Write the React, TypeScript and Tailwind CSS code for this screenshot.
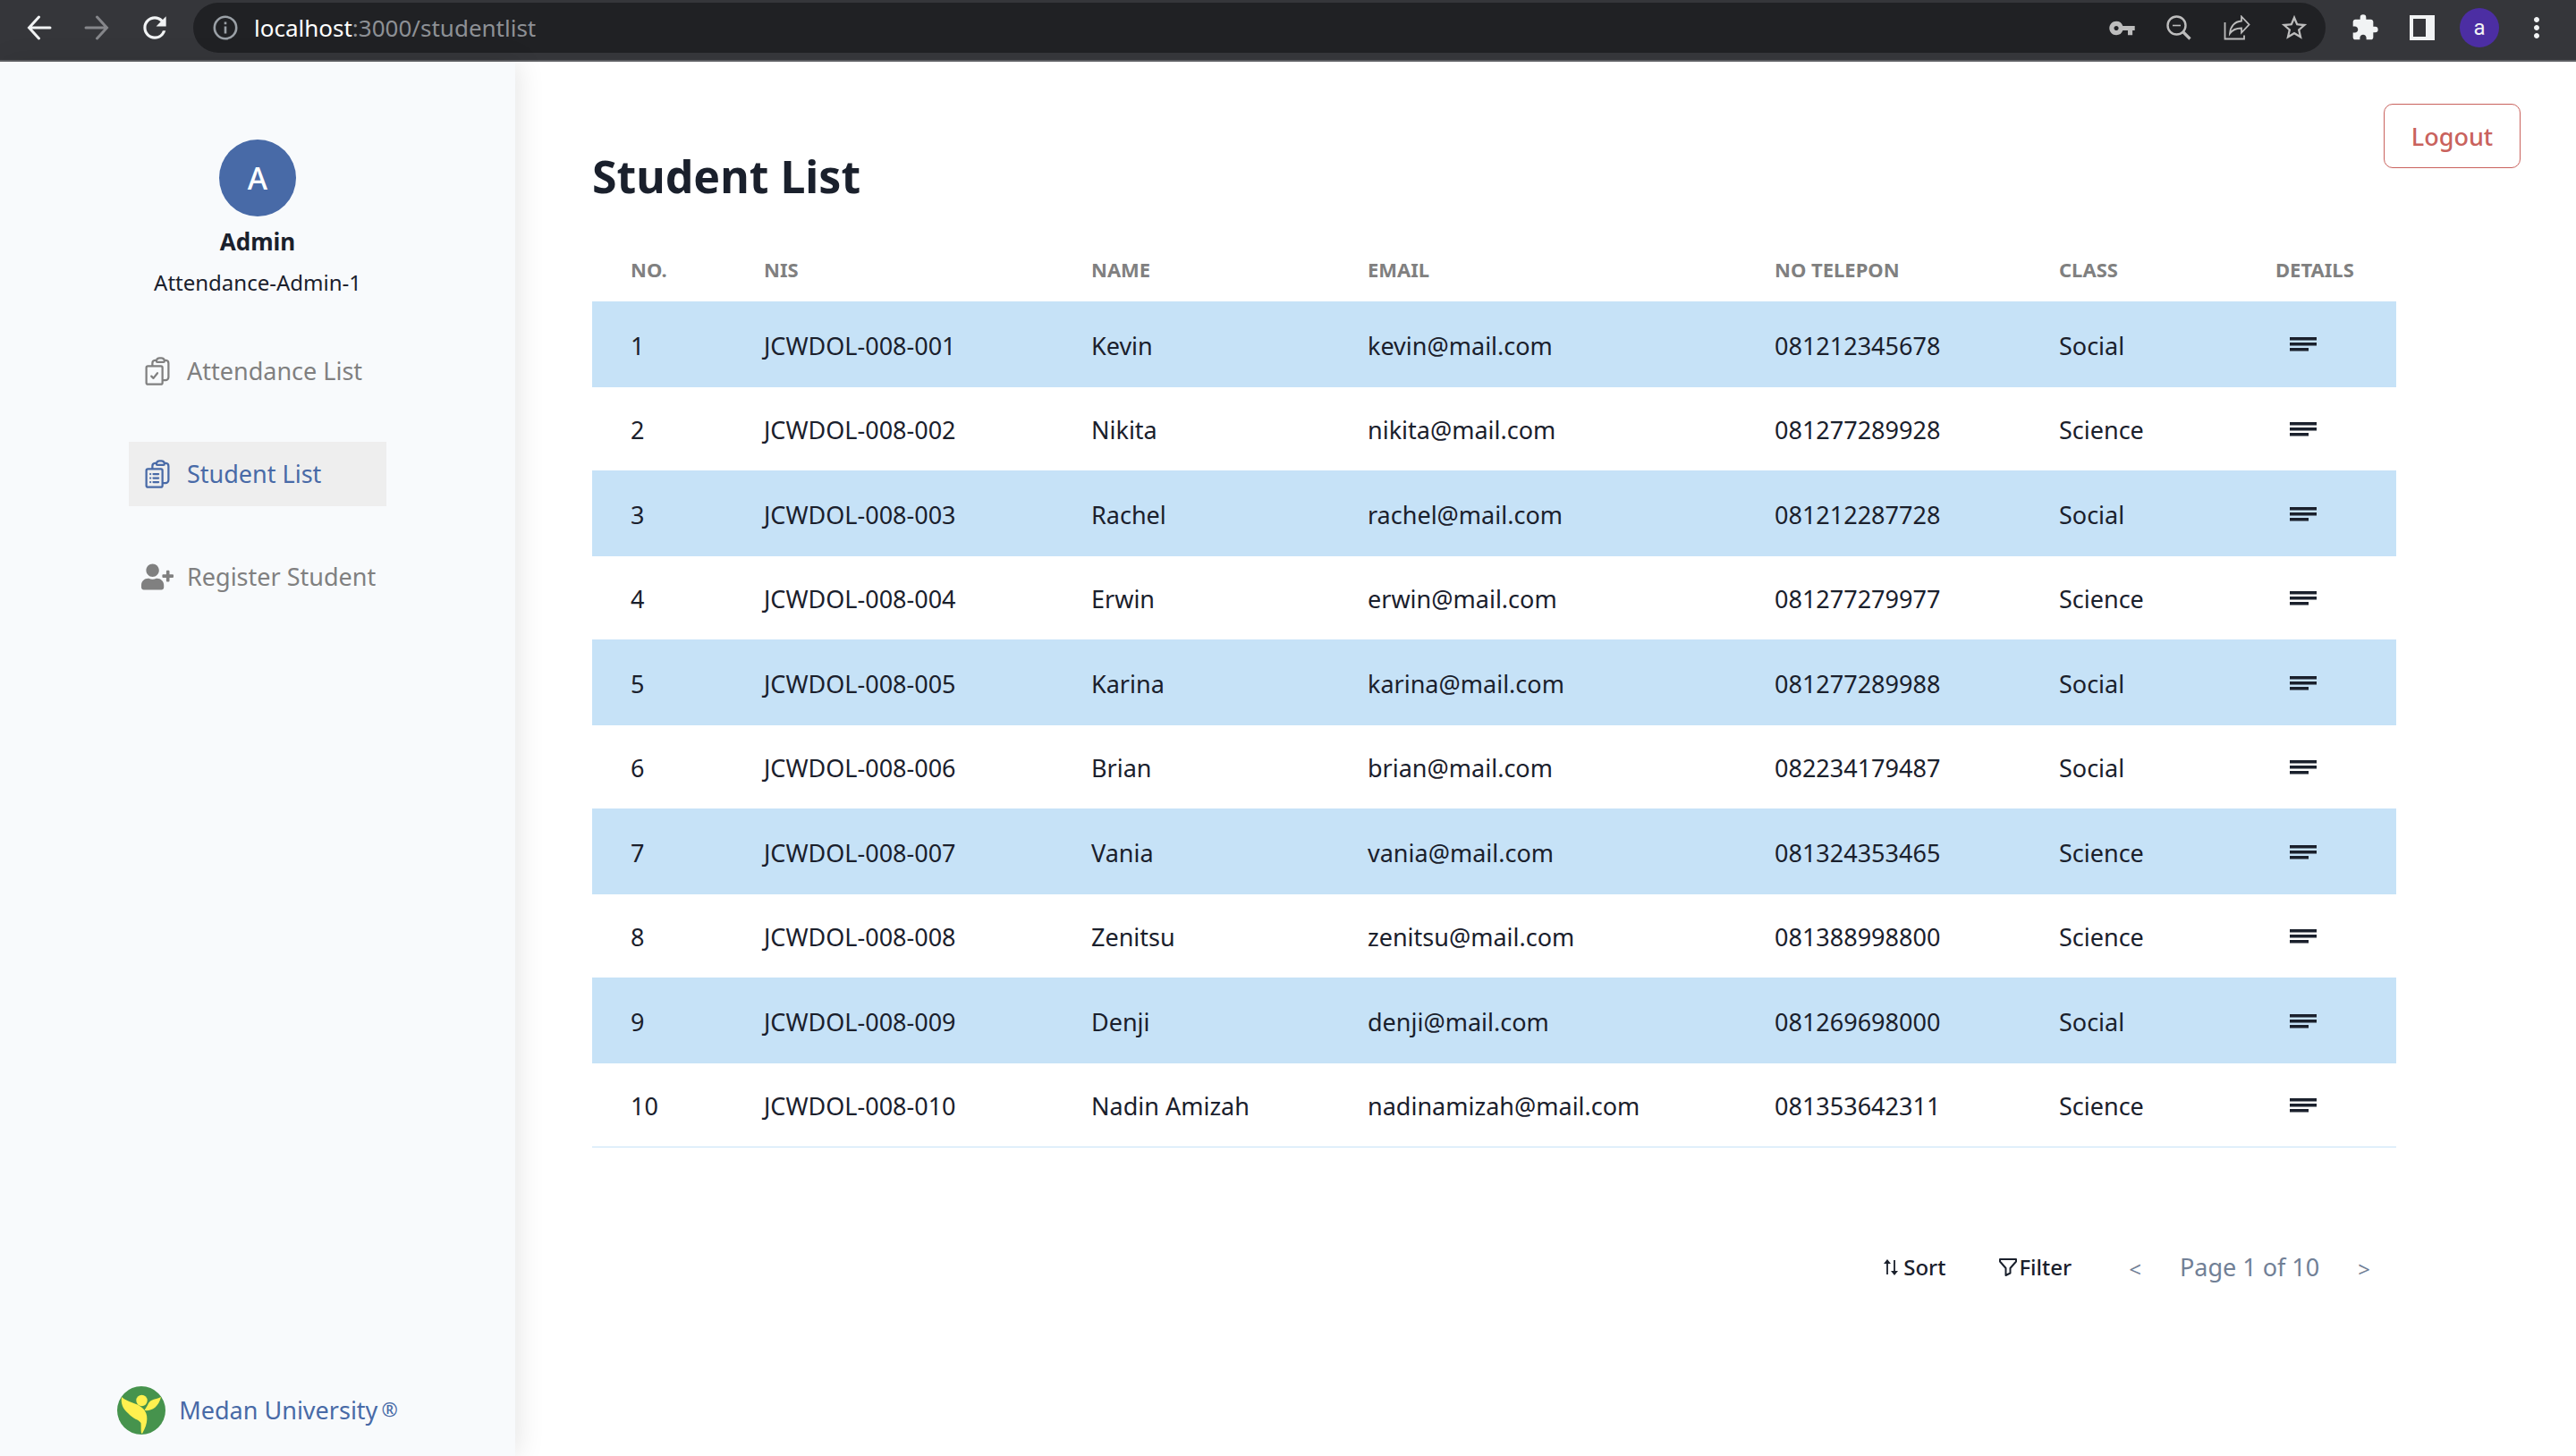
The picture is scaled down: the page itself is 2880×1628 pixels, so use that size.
import React from "react";
import { HiOutlineClipboardDocumentCheck, HiOutlineClipboardDocumentList } from "react-icons/hi2";
import { FaUserPlus } from "react-icons/fa";
import { MdVpnKey, MdExtension, MdStarBorder, MdRefresh, MdMoreVert } from "react-icons/md";

type Student = { no: number; name: string; email: string; phone: string; kelas: string };

const students: Student[] = [
  { no: 1, name: "Kevin", email: "kevin@mail.com", phone: "081212345678", kelas: "Social" },
  { no: 2, name: "Nikita", email: "nikita@mail.com", phone: "081277289928", kelas: "Science" },
  { no: 3, name: "Rachel", email: "rachel@mail.com", phone: "081212287728", kelas: "Social" },
  { no: 4, name: "Erwin", email: "erwin@mail.com", phone: "081277279977", kelas: "Science" },
  { no: 5, name: "Karina", email: "karina@mail.com", phone: "081277289988", kelas: "Social" },
  { no: 6, name: "Brian", email: "brian@mail.com", phone: "082234179487", kelas: "Social" },
  { no: 7, name: "Vania", email: "vania@mail.com", phone: "081324353465", kelas: "Science" },
  { no: 8, name: "Zenitsu", email: "zenitsu@mail.com", phone: "081388998800", kelas: "Science" },
  { no: 9, name: "Denji", email: "denji@mail.com", phone: "081269698000", kelas: "Social" },
  { no: 10, name: "Nadin Amizah", email: "nadinamizah@mail.com", phone: "081353642311", kelas: "Science" },
];

const columns = [
  { label: "NO.", width: "w-[149px]" },
  { label: "NIS", width: "w-[366px]" },
  { label: "NAME", width: "w-[309px]" },
  { label: "EMAIL", width: "w-[455px]" },
  { label: "NO TELEPON", width: "w-[318px]" },
  { label: "CLASS", width: "w-[242px]" },
  { label: "DETAILS", width: "w-[178px]" },
];

function Arrow({ className }: { className: string }) {
  return (
    <svg viewBox="0 0 28 28" className={className} fill="none" stroke="currentColor" strokeWidth="3" strokeLinecap="round">
      <path d="M26 14H3M13.500 2L2.500 14l11 12" />
    </svg>
  );
}

function InfoIcon() {
  return (
    <svg viewBox="0 0 28 28" className="size-7 text-[#9aa0a6]" fill="none" stroke="currentColor" strokeWidth="2.600">
      <circle cx="14" cy="14" r="12.200" />
      <path d="M14 12.500v8M14 7.500v2.800" />
    </svg>
  );
}

function ZoomOutIcon() {
  return (
    <svg viewBox="0 0 28 28" className="size-7" fill="none" stroke="currentColor" strokeWidth="2.400">
      <circle cx="11.500" cy="11.500" r="10" />
      <path d="M7 11.500h9" strokeWidth="1.600" />
      <path d="M18.500 18.500l8 8" strokeWidth="3.200" />
    </svg>
  );
}

function ShareIcon() {
  return (
    <svg viewBox="0 0 30 28" className="h-7 w-[30px]" fill="none" stroke="currentColor" strokeWidth="1.800">
      <path d="M1.500 8v18.500H23V22.500" />
      <path d="M20 1.500L28.500 10.500L20 19.500V14.500C14 14.500 10 16 7 20.500C7.500 13 12 7 20 6.500Z" />
    </svg>
  );
}

function PanelIcon() {
  return (
    <svg viewBox="0 0 28 28" className="size-7" fill="currentColor">
      <path fillRule="evenodd" d="M0 0H28V28H0ZM4 4V24H18V4Z" />
    </svg>
  );
}

function BrowserBar() {
  return (
    <header className="flex h-[69px] shrink-0 items-start border-b-2 border-[#5d5e62] bg-[#35363a] pt-[3px] text-[#f1f3f4]">
      <div className="flex h-14 w-[216px] shrink-0 items-center gap-9 pl-[30px]">
        <button aria-label="Back"><Arrow className="size-7" /></button>
        <button aria-label="Forward" className="text-[#85868a]"><Arrow className="size-7 rotate-180" /></button>
        <button aria-label="Reload"><MdRefresh className="-ml-1 size-[38px]" /></button>
      </div>
      <div className="flex h-14 grow items-center rounded-full bg-[#202124] pr-[18px] pl-[22px] text-[#bdbdbd]">
        <InfoIcon />
        <p className="grow pl-[18px] text-[26px] text-[#8d9095]">
          <span className="text-white">localhost</span>:3000/studentlist
        </p>
        <div className="flex items-center">
          <button aria-label="Passwords"><MdVpnKey className="size-[31px]" /></button>
          <button aria-label="Zoom" className="ml-[34px]"><ZoomOutIcon /></button>
          <button aria-label="Share" className="ml-9"><ShareIcon /></button>
          <button aria-label="Bookmark" className="ml-8"><MdStarBorder className="size-[34px]" /></button>
        </div>
      </div>
      <div className="flex h-14 w-[280px] shrink-0 items-center pl-7">
        <button aria-label="Extensions"><MdExtension className="size-8" /></button>
        <button aria-label="Side panel" className="ml-[34px]"><PanelIcon /></button>
        <button aria-label="Profile" className="ml-7 flex size-11 items-center justify-center rounded-full bg-[#4c2ea3] font-[Roboto] text-2xl">a</button>
        <button aria-label="Menu" className="ml-6"><MdMoreVert className="size-9" /></button>
      </div>
    </header>
  );
}

function Logo() {
  return (
    <svg viewBox="0 0 54 54" className="size-[54px]">
      <circle cx="27" cy="27" r="27" fill="#46934d" />
      <g fill="#fff04f">
        <circle cx="27.500" cy="16" r="6.200" />
        <path d="M5 12C11 18 22 18 29 25C35 31 35 41 28 53C26 53 27 47 26.500 41C24 37 18 37 12 30C6 25 4 19 5 12Z" />
        <path d="M49 12C43 15 38 14 35 19C34 22 32 24 30.500 27C38 28 46 24 49 12Z" />
      </g>
    </svg>
  );
}

function Sidebar() {
  const item = "flex h-[72px] w-[288px] items-center gap-[15px] pl-[14px] whitespace-nowrap";
  return (
    <aside className="flex w-[20%] shrink-0 flex-col items-center bg-[#f8fafc] pt-[87px] pb-6 shadow-[4px_0_28px_rgba(0,0,0,0.1)]">
      <div className="flex size-[86px] items-center justify-center rounded-full bg-[#486aa7] text-[34px] font-medium text-white">A</div>
      <p className="mt-2 text-[26px] leading-10 font-bold">Admin</p>
      <p className="mt-2 text-2xl leading-9">Attendance-Admin-1</p>
      <nav className="mt-[45px] flex flex-col gap-[43px] text-[27px] text-[#808080]">
        <a href="#attendance" className={item}>
          <HiOutlineClipboardDocumentCheck className="size-9 shrink-0" />
          Attendance List
        </a>
        <a href="#students" className={`${item} bg-[#eeeeee] text-[#486aa7]`}>
          <HiOutlineClipboardDocumentList className="size-9 shrink-0" />
          Student List
        </a>
        <a href="#register" className={item}>
          <FaUserPlus className="size-9 shrink-0" />
          Register Student
        </a>
      </nav>
      <footer className="mt-auto flex items-center gap-[15px] text-[27px] leading-10 text-[#486aa7]">
        <Logo />
        <p>Medan University<span className="pl-1 align-[3px] text-[22px] leading-none">®</span></p>
      </footer>
    </aside>
  );
}

function DetailsIcon() {
  return (
    <svg viewBox="0 0 30 16" className="h-4 w-[30px]" fill="currentColor">
      <rect width="30" height="3.500" />
      <rect y="6" width="30" height="3.500" />
      <rect y="12" width="21" height="3.500" />
    </svg>
  );
}

function StudentTable() {
  return (
    <table className="w-full table-fixed text-left">
      <thead>
        <tr className="h-[71px]">
          {columns.map((c) => (
            <th key={c.label} scope="col" className={`${c.width} pl-[43px] text-[22px] font-bold text-[#808080]`}>{c.label}</th>
          ))}
        </tr>
      </thead>
      <tbody>
        {students.map((s) => (
          <tr key={s.no} className="h-[95px] border-b border-[#c6e2f7] odd:bg-[#c6e2f7] even:h-[94px] [&>td]:pt-[5px] [&>td]:pl-[43px] [&>td:last-child]:pt-0.5">
            <td>{s.no}</td>
            <td>JCWDOL-008-{String(s.no).padStart(3, "0")}</td>
            <td>{s.name}</td>
            <td>{s.email}</td>
            <td>{s.phone}</td>
            <td>{s.kelas}</td>
            <td>
              <button aria-label={`Details of ${s.name}`} className="block px-4"><DetailsIcon /></button>
            </td>
          </tr>
        ))}
      </tbody>
    </table>
  );
}

function SortIcon() {
  return (
    <svg viewBox="0 0 16 18" className="h-[18px] w-4" fill="none" stroke="currentColor" strokeWidth="1.800">
      <path d="M4 17V3M12 1V15" />
      <path d="M0 5L4 0L8 5ZM8 13L12 18L16 13Z" fill="currentColor" stroke="none" />
    </svg>
  );
}

function FilterIcon() {
  return (
    <svg viewBox="0 0 20 20" className="size-5" fill="none" stroke="currentColor" strokeWidth="2" strokeLinejoin="round">
      <path d="M1 1H19V3.500L12.500 11V16.500L7.500 19V11L1 3.500Z" />
    </svg>
  );
}

function Pager() {
  return (
    <div className="flex items-center justify-end pr-[29px]">
      <button className="flex items-center gap-1.5 text-2xl font-medium"><SortIcon />Sort</button>
      <button className="ml-[60px] flex items-center gap-0.5 text-2xl font-medium"><FilterIcon />Filter</button>
      <button aria-label="Previous page" className="ml-16 pt-1 text-2xl text-[#718096]">&lt;</button>
      <p className="mx-[43px] text-[27px] text-[#718096]">Page 1 of 10</p>
      <button aria-label="Next page" className="pt-1 text-2xl text-[#718096]">&gt;</button>
    </div>
  );
}

export default function App() {
  return (
    <div className="flex min-h-screen flex-col bg-white font-['Noto_Sans',sans-serif] text-[27px] text-[#1a202c]">
      <BrowserBar />
      <div className="flex grow">
        <Sidebar />
        <main className="flex grow items-start pt-[47px] pr-[62px] pl-[86px]">
          <section className="grow pt-[43px]">
            <h1 className="text-[50px] leading-[76px] font-bold">Student List</h1>
            <div className="pt-[31px]"><StudentTable /></div>
            <div className="pt-[114px]"><Pager /></div>
          </section>
          <button className="-ml-[14px] h-[72px] w-[153px] shrink-0 rounded-[10px] border border-[#c9625d] pt-0.5 font-medium text-[#c9625d]">Logout</button>
        </main>
      </div>
    </div>
  );
}
